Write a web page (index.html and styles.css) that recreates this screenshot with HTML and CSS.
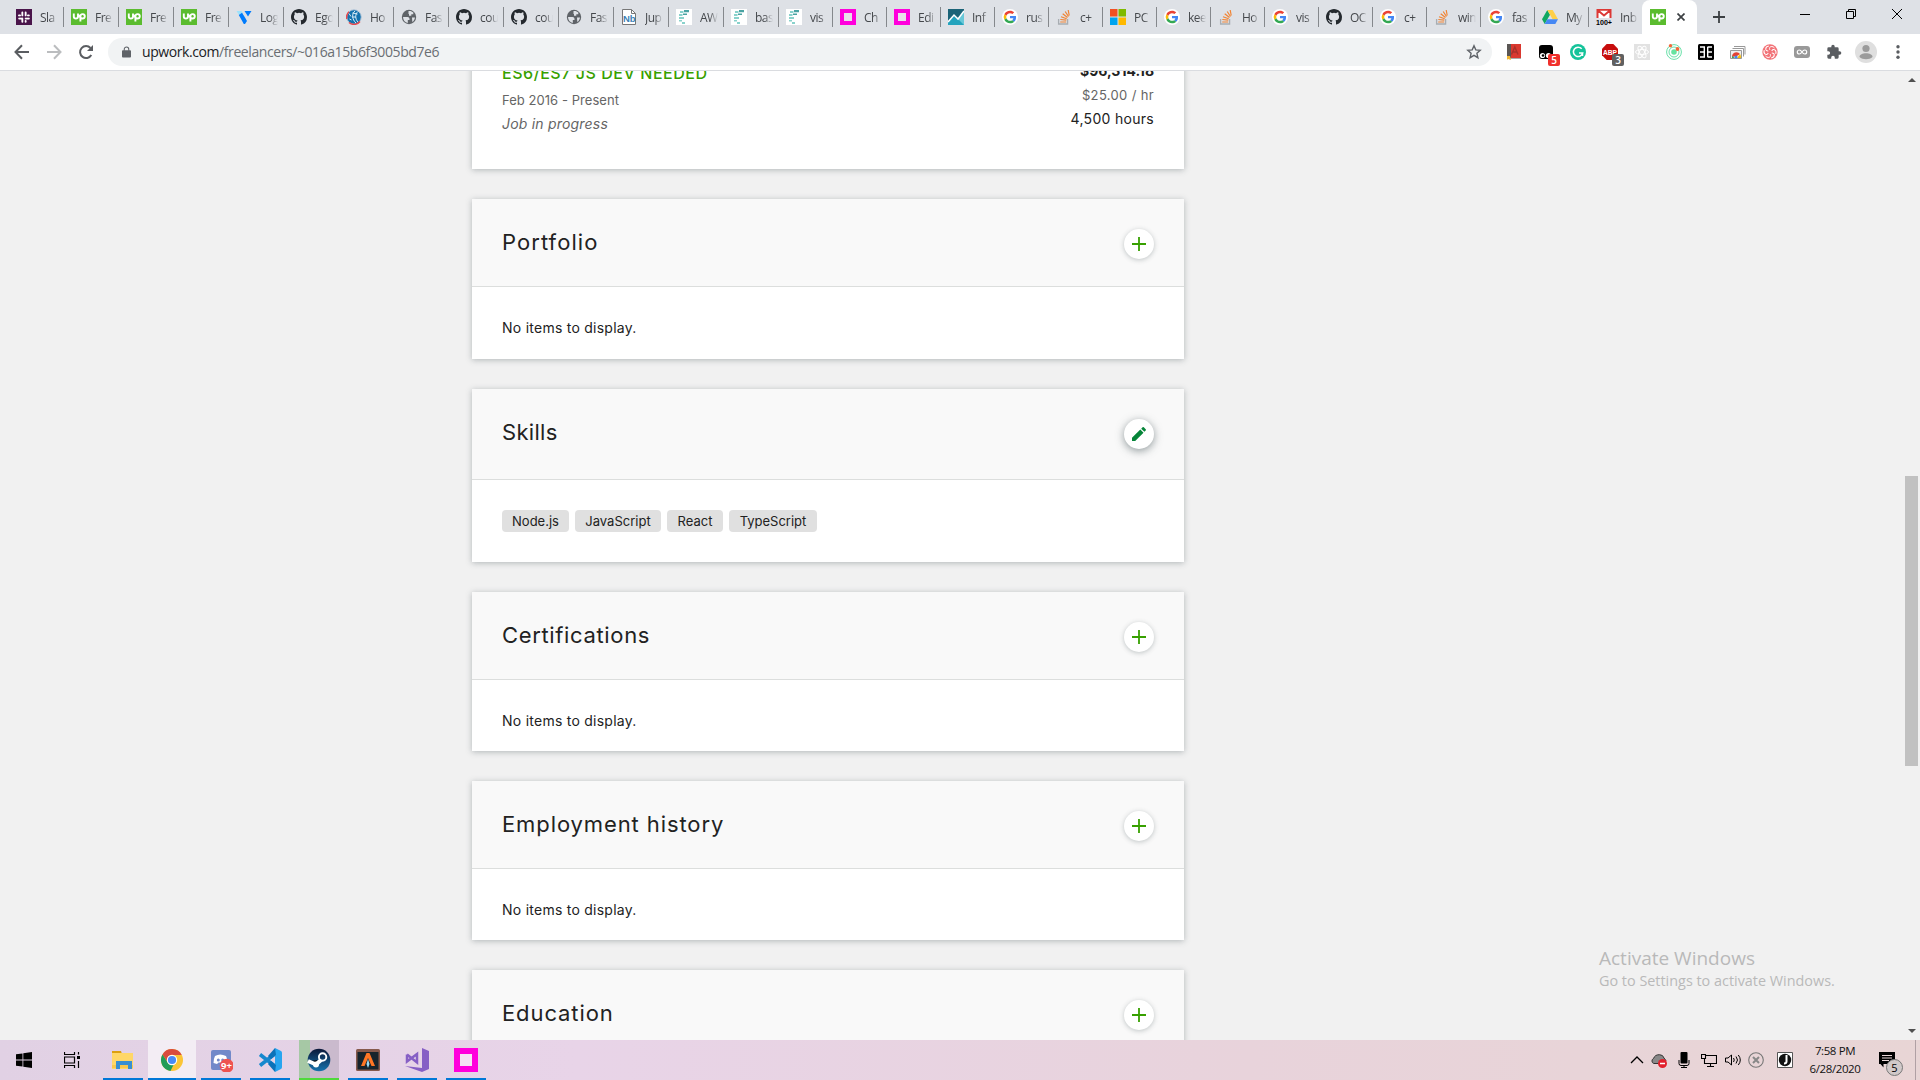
FILE: index.html
```html
<!DOCTYPE html>
<html lang="en">
<head>
<meta charset="utf-8">
<title>Upwork freelancer profile</title>
<link rel="stylesheet" href="styles.css">
</head>
<body>
<svg class="sprite" xmlns="http://www.w3.org/2000/svg">
  <symbol id="slack" viewBox="0 0 16 16"><path fill="#4a154b" d="M0 0h16v16H0z"/><g stroke="#fff" stroke-width="2" stroke-linecap="round"><path d="M6.4 3.4v3.2M3 6.4h1M9.6 3.4v3.2M12 6.4h.8M3.2 9.4h3M9.6 9.4h3.2M6.4 9.6v3.2M9.6 12v.8"/></g><path stroke="#4a154b" stroke-width=".7" d="M8 2v12M2 8h12"/></symbol>
  <symbol id="up" viewBox="0 0 16 16"><path fill="#5bbc2f" d="M0 0h16v16H0z"/><path d="M2.800 4.500v3a2.100 2.100 0 0 0 4.200 0v-3M9.400 12.500V7a2.200 2.200 0 1 1 2.100 2.500c-1.600 0-2.800-1.700-3.600-3.700" fill="none" stroke="#fff" stroke-width="1.900"/></symbol>
  <symbol id="vultr" viewBox="0 0 16 16"><path fill="#9ee2fb" d="M.5 2h5l1.500 2.500-3 3z"/><path fill="#007bfc" d="M2.800 6 6 3.800l3 4.700L11 12l-2 3H7.800zM8.500 2h7L12 7.500z"/></symbol>
  <symbol id="github" viewBox="0 0 16 16"><path fill="#24292e" d="M8 0C3.580 0 0 3.580 0 8c0 3.540 2.290 6.530 5.470 7.590.4.070.55-.17.55-.38 0-.19-.01-.82-.01-1.490-2.010.37-2.530-.49-2.690-.94-.09-.23-.48-.94-.82-1.130-.28-.15-.68-.52-.01-.53.63-.01 1.080.58 1.230.82.72 1.210 1.870.87 2.330.66.070-.52.28-.87.51-1.070-1.780-.2-3.640-.89-3.640-3.950 0-.87.31-1.590.82-2.150-.08-.2-.36-1.020.08-2.120 0 0 .67-.21 2.200.82a7.600 7.600 0 0 1 4 0c1.530-1.040 2.200-.82 2.200-.82.44 1.100.16 1.920.08 2.120.51.56.82 1.270.82 2.150 0 3.070-1.870 3.750-3.650 3.950.29.25.54.73.54 1.480 0 1.070-.01 1.930-.01 2.200 0 .21.15.46.55.38A8 8 0 0 0 16 8c0-4.420-3.580-8-8-8z"/></symbol>
  <symbol id="helix" viewBox="0 0 16 16"><circle cx="8" cy="8" r="7.300" fill="#1272ae" stroke="#b9c9da"/><path d="M3 13.500a7.500 7.500 0 0 0 11-1M.8 10A7.500 7.500 0 0 1 3 2.800" stroke="#e5484d" stroke-width="1.400" fill="none"/><path d="M9 2C5.500 4.500 6 10.500 10 14M12 2.500C9 5 9 10 12 13M6.500 4l5 1M6 8h4M3 4.500l2 3M3.500 10l2 1" stroke="#d9edf8" stroke-width="1" fill="none"/></symbol>
  <symbol id="globe" viewBox="0 0 16 16"><circle cx="8" cy="8" r="7.200" fill="#5f6368"/><path fill="#dee1e6" d="M2 8h4.500c1.200 0 2 .8 2 2v1H6.800v3C4 13.400 2 11 2 8zM8.500 2c1.500 0 2.800.6 3.800 1.500v1.800h-2v1.500H8V5h-.5V2zM11 8.500h3c-.2 1.900-1.200 3.500-2.700 4.500z"/></symbol>
  <symbol id="nb" viewBox="0 0 16 16"><path fill="#fff" stroke="#777" d="M1.500.5h9l4 4v11h-13z"/><path d="M10.500.5v4h4" fill="none" stroke="#777"/><text x="2" y="12.500" font-family="Liberation Sans, sans-serif" font-size="9.500" font-weight="bold" fill="#3c7fb5">Nb</text></symbol>
  <symbol id="fast" viewBox="0 0 16 16"><path fill="#fff" d="M0 0h16v16H0z"/><path fill="#4aa3a3" d="M8 1h5v2.200H8zM7 4.500h4V6H7z"/><path fill="#89d2cc" d="M4 2h3.500v2H4zM3 5h3.500v2H3zM3 8h5v2H3zM3 11h3v1.500H3zM6 13h3v2H6z"/></symbol>
  <symbol id="pink" viewBox="0 0 16 16"><path fill="#ff00dc" d="M0 0h16v16H0z"/><path fill="#e9e0ea" d="M4 4h8v8H4z"/></symbol>
  <symbol id="chart" viewBox="0 0 16 16"><path fill="#1c6478" d="M0 0h16v16H0z"/><path fill="#24a3bd" d="M0 13 6 6l4 4 6-8v14H0z"/><path fill="#68c8d8" d="m10 10 6-8v14z"/><path d="m0 13 6-7 4 4 6-8" stroke="#fff" stroke-width="1.500" fill="none"/></symbol>
  <symbol id="google" viewBox="0 0 48 48"><circle cx="24" cy="24" r="24" fill="#fff"/><g transform="translate(5 5) scale(.79)"><path fill="#EA4335" d="M24 9.500c3.540 0 6.710 1.220 9.210 3.600l6.850-6.850C35.900 2.380 30.470 0 24 0 14.620 0 6.510 5.380 2.560 13.220l7.980 6.190C12.430 13.720 17.740 9.500 24 9.500z"/><path fill="#4285F4" d="M46.980 24.550c0-1.570-.15-3.090-.38-4.550H24v9.020h12.940c-.58 2.960-2.260 5.480-4.780 7.180l7.730 6c4.510-4.180 7.090-10.360 7.090-17.650z"/><path fill="#FBBC05" d="M10.530 28.590a14.500 14.500 0 0 1 0-9.180l-7.980-6.190a24 24 0 0 0 0 21.560z"/><path fill="#34A853" d="M24 48c6.480 0 11.930-2.130 15.890-5.810l-7.730-6c-2.150 1.450-4.920 2.300-8.160 2.300-6.260 0-11.570-4.220-13.470-9.910l-7.980 6.190C6.510 42.620 14.620 48 24 48z"/></g></symbol>
  <symbol id="so" viewBox="0 0 16 16"><path d="M2.600 10v5h9v-5" stroke="#a8adb2" stroke-width="1.300" fill="none"/><path d="M4.200 13h6M4.300 10.500l6 .7M5 7.800l5.700 1.900M6.700 4.700l4.800 3.800M9.200 2.500l3.300 5M12.200 1l1 5.500" stroke="#f18332" stroke-width="1.200"/></symbol>
  <symbol id="ms" viewBox="0 0 16 16"><path fill="#f25022" d="M0 0h7.500v7.500H0z"/><path fill="#7fba00" d="M8.500 0H16v7.500H8.500z"/><path fill="#00a4ef" d="M0 8.500h7.500V16H0z"/><path fill="#ffb900" d="M8.500 8.500H16V16H8.500z"/></symbol>
  <symbol id="drive" viewBox="0 0 16 16"><path fill="#11a861" d="M5.300 1 8 5.700 2.700 15 0 10.200z"/><path fill="#ffcf48" d="M5.300 1h5.400L16 10.200h-5.400z"/><path fill="#4688f4" d="M5.400 10.200H16L13.300 15H2.700z"/></symbol>
  <symbol id="gmail" viewBox="0 0 16 16"><path fill="#fff" d="M1 0h14v9H1z"/><path d="M1.500 9V1l6.500 5.500L14.500 1v8M1 .7h14" stroke="#dc3835" stroke-width="2" fill="none"/><text x="0" y="15.500" font-family="Liberation Sans, sans-serif" font-size="7.200" font-weight="bold" textLength="16" lengthAdjust="spacingAndGlyphs">100+</text></symbol>
  <symbol id="plus" viewBox="0 0 14 14"><path d="M7 0v14M0 7h14" stroke="#37a000" stroke-width="1.800"/></symbol>
</svg>

<header class="tabstrip">
  <nav class="tabs">
    <div class="tab"><svg><use href="#slack"/></svg><span>Sla</span></div>
    <div class="tab"><svg><use href="#up"/></svg><span>Fre</span></div>
    <div class="tab"><svg><use href="#up"/></svg><span>Fre</span></div>
    <div class="tab"><svg><use href="#up"/></svg><span>Fre</span></div>
    <div class="tab"><svg><use href="#vultr"/></svg><span>Log</span></div>
    <div class="tab"><svg><use href="#github"/></svg><span>Ego</span></div>
    <div class="tab"><svg><use href="#helix"/></svg><span>Ho</span></div>
    <div class="tab"><svg><use href="#globe"/></svg><span>Fas</span></div>
    <div class="tab"><svg><use href="#github"/></svg><span>cou</span></div>
    <div class="tab"><svg><use href="#github"/></svg><span>cou</span></div>
    <div class="tab"><svg><use href="#globe"/></svg><span>Fas</span></div>
    <div class="tab"><svg><use href="#nb"/></svg><span>Jup</span></div>
    <div class="tab"><svg><use href="#fast"/></svg><span>AW</span></div>
    <div class="tab"><svg><use href="#fast"/></svg><span>bas</span></div>
    <div class="tab narrow"><svg><use href="#fast"/></svg><span>vis</span></div>
    <div class="tab narrow"><svg><use href="#pink"/></svg><span>Ch</span></div>
    <div class="tab narrow"><svg><use href="#pink"/></svg><span>Edi</span></div>
    <div class="tab narrow"><svg><use href="#chart"/></svg><span>Inf</span></div>
    <div class="tab narrow"><svg><use href="#google"/></svg><span>rus</span></div>
    <div class="tab narrow"><svg><use href="#so"/></svg><span>c+</span></div>
    <div class="tab narrow"><svg><use href="#ms"/></svg><span>PC</span></div>
    <div class="tab narrow"><svg><use href="#google"/></svg><span>kee</span></div>
    <div class="tab narrow"><svg><use href="#so"/></svg><span>Ho</span></div>
    <div class="tab narrow"><svg><use href="#google"/></svg><span>vis</span></div>
    <div class="tab narrow"><svg><use href="#github"/></svg><span>OC</span></div>
    <div class="tab narrow"><svg><use href="#google"/></svg><span>c+</span></div>
    <div class="tab narrow"><svg><use href="#so"/></svg><span>win</span></div>
    <div class="tab narrow"><svg><use href="#google"/></svg><span>fas</span></div>
    <div class="tab narrow"><svg><use href="#drive"/></svg><span>My</span></div>
    <div class="tab narrow last"><svg><use href="#gmail"/></svg><span>Inb</span></div>
    <div class="tab active"><svg><use href="#up"/></svg><svg class="tab-close" viewBox="0 0 8 8"><path d="m.5.5 7 7m0-7-7 7" stroke="#3c4043" stroke-width="1.700"/></svg></div>
  </nav>
  <svg class="new-tab" viewBox="0 0 12 12"><path d="M6 0v12M0 6h12" stroke="#3c4043" stroke-width="1.800"/></svg>
  <div class="window-controls">
    <svg viewBox="0 0 10 10"><path d="M0 5.500h10" stroke="#000"/></svg>
    <svg viewBox="0 0 10 10"><path d="M.5 2.500h7v7h-7zM2.500 2.500v-2h7v7h-2" fill="none" stroke="#000"/></svg>
    <svg viewBox="0 0 10 10"><path d="m0 0 10 10M10 0 0 10" stroke="#000"/></svg>
  </div>
</header>

<div class="toolbar">
  <div class="nav-buttons">
    <svg viewBox="0 0 16 16"><path d="M15 8H2M8 1.300 1.500 8 8 14.700" fill="none" stroke="#5a5d61" stroke-width="2"/></svg>
    <svg viewBox="0 0 16 16"><path d="M1 8h13M8 1.300 14.500 8 8 14.700" fill="none" stroke="#bbbdbf" stroke-width="2"/></svg>
    <svg viewBox="0 0 16 16"><path d="M13.300 11A6 6 0 1 1 12.500 4" fill="none" stroke="#5a5d61" stroke-width="2"/><path d="M15 1v6H9z" fill="#5a5d61"/></svg>
  </div>
  <div class="omnibox">
    <svg class="lock" viewBox="0 0 10 12"><path fill="#5f6368" d="M1 4h8q1 0 1 1v6q0 1-1 1H1q-1 0-1-1V5q0-1 1-1z"/><path d="M2.500 4.500V3a2.500 2.500 0 0 1 5 0v1.500" fill="none" stroke="#5f6368" stroke-width="1.200"/></svg>
    <div class="url"><b>upwork.com</b>/freelancers/~016a15b6f3005bd7e6</div>
    <svg class="star" viewBox="0 0 16 16"><path d="m8 1.800 1.800 4.100 4.400.4-3.300 3 1 4.400L8 11.400l-3.900 2.300 1-4.400-3.300-3 4.400-.4z" fill="none" stroke="#5f6368" stroke-width="1.400"/></svg>
  </div>
  <div class="extensions">
    <svg viewBox="0 0 16 16"><path fill="#d9382f" d="M1 0h14v14H1z"/><path fill="#5a5654" d="M1 0h4v14H1z"/><path d="M1 14.500h14" stroke="#aaa"/><path d="m5.500 10.500 3.300-7.500L12 10.500M7 8h4" stroke="#a8302a" stroke-width="1.400" fill="none"/><path fill="#f2b632" d="M1 12h3l1 4-3-1-1 1z"/></svg>
    <div class="ext"><svg viewBox="0 0 16 16"><rect x="1" y="1" width="14" height="14" rx="3"/><circle cx="4.500" cy="11.500" r="2.600" fill="#fff"/><circle cx="10.500" cy="11.500" r="2.600" fill="#fff"/><circle cx="5" cy="11.500" r="1.300"/></svg><span class="badge red">5</span></div>
    <svg viewBox="0 0 16 16"><circle cx="8" cy="8" r="8" fill="#15c39a"/><path d="M11.700 4.800A4.700 4.700 0 1 0 12.700 9H9m3.500 0v3" fill="none" stroke="#fff" stroke-width="1.500"/></svg>
    <div class="ext"><svg viewBox="0 0 16 16"><path fill="#c70d0d" d="M4.700 0h6.600L16 4.700v6.600L11.300 16H4.700L0 11.300V4.700z"/><text x="1" y="10.800" font-family="Liberation Sans, sans-serif" font-size="7.500" font-weight="bold" fill="#fff" textLength="14" lengthAdjust="spacingAndGlyphs">ABP</text></svg><span class="badge gray">3</span></div>
    <svg viewBox="0 0 16 16"><path fill="#e2e2e2" d="M0 0h16v16H0z"/><g fill="none" stroke="#fff"><ellipse cx="8" cy="8" rx="6.500" ry="2.500"/><ellipse cx="8" cy="8" rx="6.500" ry="2.500" transform="rotate(60 8 8)"/><ellipse cx="8" cy="8" rx="6.500" ry="2.500" transform="rotate(120 8 8)"/></g></svg>
    <svg viewBox="0 0 16 16"><g fill="none" stroke="#68e0a8"><circle cx="8" cy="8" r="7.400"/><circle cx="8" cy="8" r="5"/></g><circle cx="8" cy="8" r="2.800" fill="#67e3a0"/><circle cx="4.500" cy="1.800" r="1.700" fill="#f26838"/><circle cx="11.500" cy="5" r="1.900" fill="#f26838"/></svg>
    <svg viewBox="0 0 16 16"><rect width="16" height="16" rx="1.500"/><path d="M2 3h5M2 8h5M2 13h5M9.500 3H14M9.500 8H14M9.500 13H14M6.300 3v10M9.700 3v10" stroke="#fff" stroke-width="1.400"/></svg>
    <svg viewBox="0 0 16 16"><path d="M4 2.500h11v8M2.500 4.500h11v8" fill="none" stroke="#999"/><path fill="#eee" stroke="#999" d="M.5 6.500h11v8H.5z"/><path fill="#e44133" d="M2 13a4.500 4.500 0 0 1 8-3L7 12z"/><path fill="#3aa757" d="M2 14v-2l3 2z"/><path fill="#fbbc05" d="M7 14h4c0-1.500-.4-3-1-4z"/><circle cx="6" cy="13" r="1.500" fill="#4285f4"/></svg>
    <svg viewBox="0 0 16 16"><circle cx="8" cy="8" r="7.700" fill="#f27277"/><g fill="none" stroke="#fff" stroke-width="1"><path id="petal" d="M8 6C6 3 10 1 12.500 4"/><use href="#petal" transform="rotate(60 8 8)"/><use href="#petal" transform="rotate(120 8 8)"/><use href="#petal" transform="rotate(180 8 8)"/><use href="#petal" transform="rotate(240 8 8)"/><use href="#petal" transform="rotate(300 8 8)"/></g></svg>
    <svg viewBox="0 0 16 16"><rect y="2" width="16" height="12" rx="3" fill="#999"/><path d="M8 8c1-1.500 1.600-2 2.700-2a2 2 0 0 1 0 4C9.600 10 9 9.500 8 8S6.400 6 5.300 6a2 2 0 0 0 0 4C6.400 10 7 9.500 8 8z" fill="none" stroke="#fff" stroke-width="1.200"/></svg>
    <svg viewBox="0 0 24 24"><path fill="#5a5d61" d="M20.500 11H19V7a2 2 0 0 0-2-2h-4V3.500a2.500 2.500 0 0 0-5 0V5H4a2 2 0 0 0-2 2v3.800h1.500a2.700 2.700 0 0 1 0 5.400H2V20a2 2 0 0 0 2 2h3.800v-1.500a2.700 2.700 0 0 1 5.400 0V22H17a2 2 0 0 0 2-2v-4h1.500a2.500 2.500 0 0 0 0-5z"/></svg>
  </div>
  <svg class="avatar" viewBox="0 0 22 22"><circle cx="11" cy="11" r="11" fill="#dfdfdf"/><circle cx="11" cy="7.500" r="3.600" fill="#9b9b9b"/><path fill="#9b9b9b" d="M4.500 16c0-5 13-5 13 0-3 3-10 3-13 0z"/></svg>
  <svg class="menu-dots" viewBox="0 0 4 16"><g fill="#5a5d61"><circle cx="2" cy="2.800" r="1.700"/><circle cx="2" cy="8" r="1.700"/><circle cx="2" cy="13.200" r="1.700"/></g></svg>
</div>

<div class="viewport">
  <main class="page">
    <section class="card job">
      <div>
        <h3 class="job-title">ES6/ES7 JS DEV NEEDED</h3>
        <p class="job-dates">Feb 2016 - Present</p>
        <p class="job-status">Job in progress</p>
      </div>
      <div class="job-pay">
        <p class="total">$96,314.18</p>
        <p class="rate">$25.00 / hr</p>
        <p class="hours">4,500 hours</p>
      </div>
    </section>
    <section class="card portfolio">
      <div class="card-head"><h2>Portfolio</h2><button class="round"><svg><use href="#plus"/></svg></button></div>
      <p class="empty">No items to display.</p>
    </section>
    <section class="card skills">
      <div class="card-head"><h2>Skills</h2><button class="round edit"><svg viewBox="0 0 14 14"><path fill="#068539" d="M0 14v-3.200l8.300-8.300 3.200 3.200L3.200 14zM9.200 1.700 10.600.3q.6-.5 1.200 0l1.900 1.900q.5.600 0 1.200l-1.300 1.400z"/></svg></button></div>
      <div class="chips"><span class="c1">Node.js</span><span class="c2">JavaScript</span><span class="c3">React</span><span class="c4">TypeScript</span></div>
    </section>
    <section class="card certifications">
      <div class="card-head"><h2>Certifications</h2><button class="round"><svg><use href="#plus"/></svg></button></div>
      <p class="empty">No items to display.</p>
    </section>
    <section class="card">
      <div class="card-head"><h2>Employment history</h2><button class="round"><svg><use href="#plus"/></svg></button></div>
      <p class="empty">No items to display.</p>
    </section>
    <section class="card">
      <div class="card-head"><h2>Education</h2><button class="round"><svg><use href="#plus"/></svg></button></div>
    </section>
  </main>
  <div class="scrollbar">
    <svg viewBox="0 0 8 4"><path fill="#505050" d="m4 0 4 4H0z"/></svg>
    <div class="thumb"></div>
    <svg viewBox="0 0 8 4"><path fill="#505050" d="M0 0h8L4 4z"/></svg>
  </div>
</div>

<div class="watermark"><p class="wm-title">Activate Windows</p><p class="wm-text">Go to Settings to activate Windows.</p></div>

<footer class="taskbar">
  <div class="sys"><svg viewBox="0 0 16 16"><path d="m0 2.300 6.500-.9v6.200H0zM7.300 1.300 16 0v7.600H7.300zM0 8.400h6.500v6.200L0 13.700zM7.300 8.400H16V16l-8.700-1.300z"/></svg></div>
  <div class="sys"><svg viewBox="0 0 16 16"><path d="M.5 0v2.500h10V0M.5 16v-2.500h10V16M.5 5h10v6H.5zM14.500 0v2.500M14.500 9v7" fill="none" stroke="#000" stroke-width="1.200"/><path d="M13 4h3v3h-3z"/></svg></div>
  <div class="app first"><svg viewBox="0 0 24 24"><path fill="#dca010" d="M1 3h9l1 3H1z"/><path fill="#ffd767" d="M1 5h21v16H1z"/><path fill="#f8c84d" d="M1 17h21v3H1z"/><path fill="#378fd2" d="M5 13h16v8h-4v-4H9v4H5z"/></svg></div>
  <div class="app current"><svg viewBox="0 0 24 24"><circle cx="12" cy="12" r="11" fill="#fbc536"/><path fill="#d94c3d" d="M2.500 6.500a11 11 0 0 1 19.200.5H12a5 5 0 0 0-4.500 7z"/><path fill="#1f9d58" d="M2.500 6.500 7.700 14.500a5 5 0 0 0 6 2L10.500 23A11 11 0 0 1 2.500 6.500z"/><circle cx="12" cy="12" r="5.200" fill="#fff"/><circle cx="12" cy="12" r="4.100" fill="#4a8bf5"/></svg></div>
  <div class="app"><svg viewBox="0 0 24 24"><rect x="2" y="2" width="20" height="20" rx="2" fill="#7289c9"/><path fill="#fff" d="M6 8q5-3 11 0 2 4 1.500 7l-4 1-1-1.500h-4L8 16l-3.500-1Q4.500 11 6 8z"/><circle cx="9.300" cy="12" r="1.500" fill="#7289c9"/><circle cx="13.700" cy="12" r="1.500" fill="#7289c9"/><circle cx="17.700" cy="17.700" r="7" fill="#ef5350"/><text x="17.500" y="21" text-anchor="middle" font-family="Open Sans, sans-serif" font-weight="bold" font-size="9.500" fill="#fff">9+</text></svg></div>
  <div class="app"><svg viewBox="0 0 24 24"><path d="M18 5 2 17.500M18 19 2 6.500" stroke="#1688ce" stroke-width="3.600"/><path fill="#28a5ef" d="m17 0 6 3q1 .5 1 2v14q0 1.500-1 2l-6 3z"/><path fill="#0b72b9" d="m17 0-7 8 3 3 5-4zM17 24l-7-8 3-3 5 4z"/></svg></div>
  <div class="app steam"><svg viewBox="0 0 24 24"><defs><linearGradient id="steam-bg" x2="0" y2="1"><stop stop-color="#0c1738"/><stop offset="1" stop-color="#1674ae"/></linearGradient></defs><circle cx="12" cy="12" r="11.300" fill="url(#steam-bg)"/><circle cx="15.600" cy="9" r="3.700" fill="none" stroke="#fff" stroke-width="1.900"/><path stroke="#fff" stroke-width="4" d="m1 13 8 3.500 5-4.500"/><circle cx="9" cy="16.500" r="3" fill="#fff"/></svg></div>
  <div class="app"><svg viewBox="0 0 24 24"><rect y="1" width="24" height="22" rx="1.500" fill="#86594c"/><path fill="#17242c" d="M1.500 4h21v17.500h-21z"/><path fill="#ff7624" d="M10.500 5h3L19 18h-3.500L12 10 8.500 18H5z"/><path fill="#9bdcf5" d="m12 11 1.500 5-1.500 4-1.500-4z"/></svg></div>
  <div class="app"><svg viewBox="0 0 24 24"><path fill="#865fc5" d="m17 0 7 3v18l-7 3L0 18l17 2z"/><path d="M2 6.500v7l10-7.500v8.500L2 6.500" fill="none" stroke="#865fc5" stroke-width="2.500"/></svg></div>
  <div class="app"><svg viewBox="0 0 24 24"><path fill="#ff00dc" d="M0 0h24v24H0z"/><path fill="#f4e4f4" d="M6 6h12v12H6z"/></svg></div>
  <div class="tray">
    <svg viewBox="0 0 16 16"><path d="m2 11 6-6 6 6" fill="none" stroke="#000" stroke-width="1.300"/></svg>
    <svg class="cloud" viewBox="0 0 16 16"><path fill="#888" stroke="#333" d="M2.800 11.500a2.700 2.700 0 0 1-.3-5q1.500-4 6-3.800 3.500 0 4.500 3.300 3 2 1 5.500z"/><circle cx="11.500" cy="11.500" r="4.500" fill="#e2202c"/><path d="M9 11.500h5" stroke="#fff" stroke-width="1.500"/></svg>
    <svg class="mic" viewBox="0 0 16 16"><rect x="4.500" width="7" height="11.500" rx="1"/><path d="M3 8v3.500q0 2 2 2h6q2 0 2-2V8M8 13v2.500M5 15.500h6" fill="none" stroke="#000"/></svg>
    <svg class="net" viewBox="0 0 16 16"><path d="M5 3.500h10.500v8H3.500V7M.5 2.500h4v4h-4zM9.500 11.500v3M6 14.500h7" fill="none" stroke="#000" stroke-width="1.100"/></svg>
    <svg class="vol" viewBox="0 0 16 16"><path d="M.5 6H3l3.500-3v10L3 10H.5zM8.500 6q1.500 2 0 4M11 4.500q3 3.500 0 7M13.300 3q4 5 0 10" fill="none" stroke="#000"/></svg>
    <svg class="off" viewBox="0 0 16 16"><circle cx="8" cy="8" r="7.300" fill="none" stroke="#777" stroke-width="1.100"/><path d="m5 5 6 6m0-6-6 6" stroke="#888" stroke-width="2"/></svg>
    <svg class="jbox" viewBox="0 0 16 16"><path fill="#fff" stroke="#555" d="M.5.500h15v15H.5z"/><circle cx="8" cy="8" r="6.200" fill="#111"/><path d="M9.500 3v6.500q0 2-2.500 2" fill="none" stroke="#fff" stroke-width="2"/></svg>
    <div class="clock"><span>7:58 PM</span><span>6/28/2020</span></div>
    <div class="notify"><svg viewBox="0 0 16 16"><path d="M0 0h16v12H4.500v3.500L1.500 12H0z"/><path d="M3 3.500h10M3 6h10M3 8.500h7" stroke="#e8d5d6"/></svg><span>5</span></div>
    <div class="show-desktop"></div>
  </div>
</footer>
</body>
</html>
```
FILE: styles.css
```css
* { box-sizing: border-box; }
body {
  margin: 0;
  width: 1920px;
  height: 1080px;
  overflow: hidden;
  display: flex;
  flex-direction: column;
  background: #f1f1f1;
  font-family: "Open Sans", "Noto Sans", sans-serif;
}
h2, h3, p { margin: 0; }
svg { display: block; flex: none; }
.sprite { display: none; }

/* Tab strip */
.tabstrip { height: 34px; flex: none; display: flex; background: #dee1e6; }
.tabs { display: flex; flex: none; padding-left: 8px; }
.tab {
  position: relative;
  flex: none;
  width: 55px;
  height: 34px;
  padding-left: 8px;
  display: flex;
  align-items: center;
  gap: 8px;
}
.tab::after {
  content: "";
  position: absolute;
  right: -1px;
  top: 7px;
  width: 1px;
  height: 20px;
  background: #85888c;
}
.tab.narrow { width: 54px; }
.tab.last::after, .tab.active::after { display: none; }
.tab svg { width: 16px; height: 16px; }
.tab span {
  flex: none;
  width: 19px;
  white-space: nowrap;
  font-size: 12px;
  letter-spacing: -0.5px;
  color: #45484c;
  -webkit-mask-image: linear-gradient(90deg, #000 50%, transparent 95%);
  mask-image: linear-gradient(90deg, #000 50%, transparent 95%);
}
.tab.active { width: 55px; background: #fff; border-radius: 8px 8px 0 0; gap: 11px; }
.tab .tab-close { width: 8px; height: 8px; }
.new-tab { width: 12px; height: 12px; margin: 11px 0 0 16px; }
.window-controls { margin-left: auto; display: flex; height: 28px; align-items: center; }
.window-controls svg { width: 10px; height: 10px; margin: 0 18px; }

/* Toolbar */
.toolbar { height: 37px; flex: none; display: flex; align-items: center; background: #fff; border-bottom: 1px solid #dadce0; }
.nav-buttons { display: flex; gap: 16px; padding-left: 14px; width: 108px; }
.nav-buttons svg { width: 16px; height: 16px; }
.omnibox { width: 1384px; height: 28px; border-radius: 14px; background: #f1f3f4; display: flex; align-items: center; padding: 0 10px 0 14px; }
.lock { width: 9px; height: 12px; }
.url { margin-left: 11px; font-size: 14px; line-height: 20px; color: #6a6e73; letter-spacing: -0.42px; }
.url b { font-weight: 400; color: #202124; }
.star { width: 16px; height: 16px; margin-left: auto; }
.extensions { display: flex; gap: 16px; padding-left: 14px; }
.extensions svg { width: 16px; height: 16px; }
.ext { position: relative; }
.badge {
  position: absolute;
  left: 10px;
  top: 10px;
  width: 12px;
  height: 12px;
  border-radius: 2px;
  color: #fff;
  font-size: 10px;
  font-weight: 600;
  line-height: 12px;
  text-align: center;
}
.badge.red { background: #f0302c; }
.badge.gray { background: #606060; }
.avatar { width: 22px; height: 22px; margin-left: 13px; }
.menu-dots { width: 4px; height: 16px; margin-left: 19px; }

/* Page */
.viewport { height: 969px; flex: none; display: flex; overflow: hidden; background: #f1f1f1; }
.page { width: 1903px; padding-left: 472px; display: flex; flex-direction: column; gap: 30px; font-family: Inter, sans-serif; color: #222; }
.card { width: 712px; flex: none; background: #fff; box-shadow: 0 1px 6px rgba(57, 73, 76, 0.35); }
.job { height: 138px; margin-top: -40px; padding: 30px 30px 0; display: flex; justify-content: space-between; }
.job-title { font-size: 16px; line-height: 24px; font-weight: 500; color: #37a000; letter-spacing: 0.55px; }
.job-dates { font-size: 13px; line-height: 24px; margin-top: 3px; color: #656565; letter-spacing: 0.05px; }
.job-status { font-size: 14px; line-height: 24px; font-style: italic; color: #656565; letter-spacing: 0.2px; }
.job-pay { text-align: right; font-size: 14px; line-height: 24px; margin-top: -2px; }
.total { font-weight: 700; }
.rate { color: #656565; font-size: 13px; letter-spacing: 0.35px; }
.hours { letter-spacing: 0.3px; }
.card-head { height: 88px; padding: 29px 30px 0; display: flex; justify-content: space-between; background: #f9f9f9; border-bottom: 1px solid #dcdedd; }
.card-head h2 { font-size: 22px; line-height: 28px; font-weight: 400; letter-spacing: 0.9px; }
.portfolio h2 { letter-spacing: 1.05px; }
.skills h2 { letter-spacing: 0.3px; }
.certifications h2 { letter-spacing: 0.65px; }
.round { width: 30px; height: 30px; margin-top: 1px; border: 0; padding: 8px; border-radius: 50%; background: #fff; box-shadow: 0 1px 5px rgba(57, 73, 76, 0.3); }
.round svg { width: 14px; height: 14px; }
.round.edit { box-shadow: 0 2px 8px rgba(57, 73, 76, 0.55); }
.empty { height: 71px; padding-top: 30px; padding-left: 30px; font-size: 14px; line-height: 21px; letter-spacing: 0.25px; }
.portfolio .empty { height: 72px; }
.skills .card-head { height: 91px; }
.chips { height: 82px; padding: 30px 30px 0; display: flex; gap: 6px; }
.chips span { height: 22px; border-radius: 4px; background: #e0e0e0; font-size: 13px; line-height: 22px; text-align: center; }
.c1 { width: 67px; }
.c2 { width: 86px; }
.c3 { width: 56px; }
.c4 { width: 88px; }
.scrollbar { width: 17px; height: 969px; display: flex; flex-direction: column; align-items: center; padding: 7px 0; background: #f1f1f1; }
.scrollbar svg { width: 8px; height: 4px; }
.thumb { width: 13px; height: 290px; margin: 394px 0 auto; background: #c1c1c1; }

.watermark { position: absolute; left: 1599px; top: 944px; color: #b9b9b9; white-space: nowrap; }
.wm-title { font-size: 19px; line-height: 28px; }
.wm-text { font-size: 14.4px; line-height: 18px; }

/* Taskbar */
.taskbar { height: 40px; flex: none; display: flex; background: linear-gradient(90deg, #e1d1e4, #e8d4e8 30%, #e8d3db 65%, #e8d5d5); }
.sys { width: 48px; display: grid; place-items: center; }
.sys svg { width: 16px; height: 16px; }
.app { width: 40px; height: 40px; margin-right: 9px; display: grid; place-items: center; border-bottom: 2px solid #0078d7; padding-top: 2px; }
.app svg { width: 24px; height: 24px; }
.app.first { margin-left: 7px; }
.app.current { width: 48px; margin: 0 5px 0 -4px; background: #f3edf4; }
.app.steam { background: linear-gradient(90deg, #a6c8a5 11px, #cabacd 11px); border-bottom-color: #4fd93b; }
.tray { margin-left: auto; display: flex; align-items: center; height: 40px; }
.tray svg { width: 16px; height: 16px; }
.tray .cloud { margin-left: 6px; }
.tray .mic { margin-left: 9px; }
.tray .net { margin-left: 9px; }
.tray .vol { margin-left: 8px; }
.tray .off { margin-left: 7px; }
.tray .jbox { margin-left: 13px; }
.clock { width: 70px; margin-left: 7px; display: flex; flex-direction: column; text-align: center; font-size: 11.5px; line-height: 18px; letter-spacing: -0.4px; color: #111; }
.notify { position: relative; margin-left: 9px; }
.notify span {
  position: absolute;
  left: 7px;
  top: 7px;
  width: 17px;
  height: 17px;
  border: 1px solid #777;
  border-radius: 50%;
  background: #d1c9c9;
  font-size: 11px;
  line-height: 15px;
  text-align: center;
}
.show-desktop { width: 5px; height: 40px; margin-left: 20px; border-left: 1px solid #b0a0a4; }
```
